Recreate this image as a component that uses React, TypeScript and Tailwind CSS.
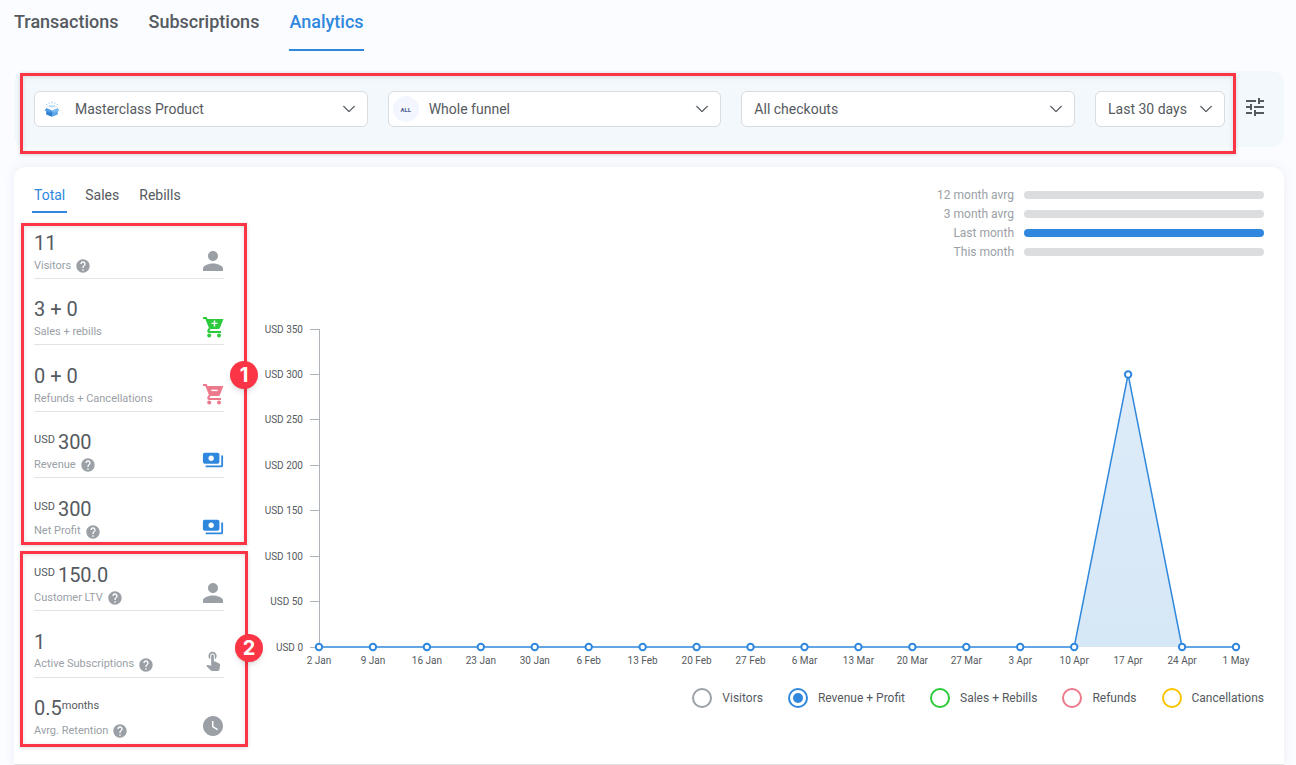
import { useState } from "react";
import clsx from "clsx";
import { BsChevronDown } from "react-icons/bs";
import { MdHelp, MdPayments, MdPerson, MdTouchApp, MdTune, MdWatchLater } from "react-icons/md";

const NAV = ["Transactions", "Subscriptions", "Analytics"];
const TABS = ["Total", "Sales", "Rebills"];

const AVERAGES = [
  { label: "12 month avrg", active: false },
  { label: "3 month avrg", active: false },
  { label: "Last month", active: true },
  { label: "This month", active: false },
];

const SERIES = [
  { label: "Visitors", ring: "border-[#9aa0a6]" },
  { label: "Revenue + Profit", ring: "border-[#2f88dd]" },
  { label: "Sales + Rebills", ring: "border-[#2bcb3c]" },
  { label: "Refunds", ring: "border-[#ec7a8c]" },
  { label: "Cancellations", ring: "border-[#f9c400]" },
];

const POINTS = [
  { date: "2 Jan", value: 0 },
  { date: "9 Jan", value: 0 },
  { date: "16 Jan", value: 0 },
  { date: "23 Jan", value: 0 },
  { date: "30 Jan", value: 0 },
  { date: "6 Feb", value: 0 },
  { date: "13 Feb", value: 0 },
  { date: "20 Feb", value: 0 },
  { date: "27 Feb", value: 0 },
  { date: "6 Mar", value: 0 },
  { date: "13 Mar", value: 0 },
  { date: "20 Mar", value: 0 },
  { date: "27 Mar", value: 0 },
  { date: "3 Apr", value: 0 },
  { date: "10 Apr", value: 0 },
  { date: "17 Apr", value: 300 },
  { date: "24 Apr", value: 0 },
  { date: "1 May", value: 0 },
];

function CartIcon({ sign, className }: { sign: "plus" | "minus"; className: string }) {
  return (
    <svg viewBox="0 0 22 22" className={clsx("size-[22px]", className)} fill="currentColor" aria-hidden="true">
      <path d="M1 1h3.6l1 2H21.4l-3.4 8.8c-.3.8-.9 1.2-1.7 1.2H8.6l-1 1.6c-.1.3 0 .5.3.5H19v2H7.2c-1.6 0-2.5-1.6-1.7-3l1.4-2.4L3.3 3H1z" />
      <circle cx="7.2" cy="19.4" r="2" />
      <circle cx="17" cy="19.4" r="2" />
      <path
        d={sign === "plus" ? "M9.5 7.4h6M12.5 4.4v6" : "M9.3 7.4h6.4"}
        stroke="#fff"
        strokeWidth="1.4"
        fill="none"
      />
    </svg>
  );
}

function ProductIcon() {
  return (
    <svg viewBox="0 0 16 16" className="size-4" aria-hidden="true">
      <path d="M2.2 8.2 8 10.2v5.6l-5.8-2.2z" fill="#2f7fd0" />
      <path d="M13.8 8.2 8 10.2v5.6l5.8-2.2z" fill="#5aa5e6" />
      <path d="M2.4 7 8 9.6 6.2 12 .6 9.6z" fill="#4c9be2" />
      <path d="M13.6 7 8 9.6l1.8 2.4 5.6-2.4z" fill="#7ab9ee" />
      <path
        d="M8 .8v1.6M8 4v2.6M4.8 1.6l.5 1M11.2 1.6l-.5 1M5.6 4l.8 2M10.4 4l-.8 2M2.2 3l1 1M13.8 3l-1 1M3.6 5.2l1 1M12.4 5.2l-1 1"
        stroke="#7fb9ea"
        strokeWidth=".9"
      />
    </svg>
  );
}

interface Stat {
  value: string;
  label: string;
  prefix?: string;
  suffix?: string;
  help?: boolean;
  icon: React.ReactNode;
}

const STATS: Stat[] = [
  { value: "11", label: "Visitors", help: true, icon: <MdPerson className="size-[30px] shrink-0 text-[#9aa0a6]" /> },
  { value: "3 + 0", label: "Sales + rebills", icon: <CartIcon sign="plus" className="text-[#2bcb3c]" /> },
  { value: "0 + 0", label: "Refunds + Cancellations", icon: <CartIcon sign="minus" className="text-[#ec7a8c]" /> },
  { value: "300", prefix: "USD", label: "Revenue", help: true, icon: <MdPayments className="size-[22px] text-[#2f88dd]" /> },
  { value: "300", prefix: "USD", label: "Net Profit", help: true, icon: <MdPayments className="size-[22px] text-[#2f88dd]" /> },
  { value: "150.0", prefix: "USD", label: "Customer LTV", help: true, icon: <MdPerson className="size-[30px] shrink-0 text-[#9aa0a6]" /> },
  { value: "1", label: "Active Subscriptions", help: true, icon: <MdTouchApp className="size-[22px] text-[#9aa0a6]" /> },
  { value: "0.5", suffix: "months", label: "Avrg. Retention", help: true, icon: <MdWatchLater className="size-6 shrink-0 text-[#9aa0a6]" /> },
];

function StatRow({ stat, last }: { stat: Stat; last: boolean }) {
  return (
    <li className={clsx("flex h-12 items-end justify-between border-b", last ? "border-transparent" : "border-[#e2e3e5]")}>
      <div className="pb-px">
        <p className="flex items-start text-xl leading-6 text-[#555a60]">
          {stat.prefix && <span className="mr-[3px] text-[11px] leading-5">{stat.prefix}</span>}
          {stat.value}
          {stat.suffix && <span className="text-[11px] leading-5">{stat.suffix}</span>}
        </p>
        <p className="flex h-[22px] items-center gap-1 text-[11px] text-[#9aa0a6]">
          {stat.label}
          {stat.help && <MdHelp className="size-4" />}
        </p>
      </div>
      <span className="mb-[6px] flex size-[22px] items-center justify-center">{stat.icon}</span>
    </li>
  );
}

interface FilterProps {
  label: string;
  value: string;
  className: string;
  padding: string;
  icon?: React.ReactNode;
}

function Filter({ label, value, className, padding, icon }: FilterProps) {
  return (
    <div className={clsx("relative", className)}>
      <select
        aria-label={label}
        className={clsx(
          "block h-9 w-full appearance-none rounded-md border border-[#d9dcdf] bg-white pr-9 text-sm text-[#555a60] outline-none",
          padding
        )}
        defaultValue={value}
      >
        <option>{value}</option>
      </select>
      {icon && (
        <span className="pointer-events-none absolute inset-y-0 left-[5px] flex w-[26px] items-center justify-center">
          {icon}
        </span>
      )}
      <BsChevronDown
        className="pointer-events-none absolute top-[11px] right-3 size-[14px] text-[#555a60]"
        strokeWidth={0.5}
      />
    </div>
  );
}

const TOP = 9;
const STEP = 318 / 7;
const BASE = TOP + 318;
const FIRST_X = 55;
const GAP_X = 917 / (POINTS.length - 1);

function RevenueChart() {
  const x = (i: number) => FIRST_X + i * GAP_X;
  const y = (value: number) => BASE - (value / 50) * STEP;
  const line = POINTS.map((p, i) => `${x(i)},${y(p.value)}`).join(" ");

  return (
    <svg viewBox="0 0 1000 350" className="block w-full" role="img" aria-label="Revenue and profit by week">
      <defs>
        <linearGradient id="area" x1="0" y1="0" x2="0" y2="1">
          <stop offset="0" stopColor="#deecf9" />
          <stop offset="1" stopColor="#d6e7f6" />
        </linearGradient>
      </defs>
      <path d={`M${FIRST_X + 0.5} ${TOP}V${BASE}`} stroke="#adb3b9" />
      {[350, 300, 250, 200, 150, 100, 50, 0].map((tick) => {
        const ty = Math.floor(y(tick));
        return (
          <g key={tick}>
            <path d={`M46 ${ty + 0.5}h10`} stroke="#adb3b9" />
            <text x="39" y={ty + 4} textAnchor="end" className="fill-[#555a60] text-[10px]">
              USD {tick}
            </text>
          </g>
        );
      })}
      <polygon points={`${FIRST_X},${BASE} ${line} ${x(17)},${BASE}`} fill="url(#area)" />
      <polyline points={line} fill="none" stroke="#2f88dd" strokeWidth="1.5" />
      {POINTS.map((p, i) => (
        <g key={p.date}>
          <circle cx={x(i)} cy={y(p.value)} r="3.2" fill="#fff" stroke="#2f88dd" strokeWidth="2" />
          <text x={x(i)} y={BASE + 17} textAnchor="middle" className="fill-[#555a60] text-[10px]">
            {p.date}
          </text>
        </g>
      ))}
    </svg>
  );
}

const calloutClass =
  "pointer-events-none absolute border-3 border-[#fb3545] shadow-[0_1px_4px_rgba(0,0,0,0.15),inset_0_1px_5px_rgba(0,0,0,0.12)]";
const badgeClass =
  "absolute flex size-7 items-center justify-center rounded-full bg-[#fb3545] font-['Inter',sans-serif] text-xl font-bold text-white shadow-md";

export default function App() {
  const [series, setSeries] = useState("Revenue + Profit");

  return (
    <div className="min-h-screen overflow-hidden bg-[#fbfcff] font-['Roboto',sans-serif] text-[#555a60]">
      <nav className="flex h-[51px] gap-[30px] pl-[14px] text-lg font-medium">
        {NAV.map((item) => (
          <a
            key={item}
            href="#"
            className={clsx("border-b-2 pt-2", item === "Analytics" ? "border-[#2f88dd] text-[#2f88dd]" : "border-transparent")}
          >
            {item}
          </a>
        ))}
      </nav>

      <main className="pr-3 pl-[14px]">
        <section className="relative mt-5 flex h-[76px] items-start gap-5 rounded-xl bg-[#f2f8fc] pt-5 pl-5">
          <Filter label="Product" value="Masterclass Product" className="flex-1" padding="pl-10" icon={<ProductIcon />} />
          <Filter
            label="Funnel"
            value="Whole funnel"
            className="flex-1"
            padding="pl-10"
            icon={
              <span className="flex size-[26px] items-center justify-center rounded-full bg-[#f3f5ff] text-[6px] font-bold text-[#4a5a8a]">
                ALL
              </span>
            }
          />
          <Filter label="Checkout" value="All checkouts" className="flex-1" padding="pl-3" />
          <div className="flex items-center gap-[18px] pr-[17px]">
            <Filter label="Period" value="Last 30 days" className="w-[130px]" padding="pl-3" />
            <button type="button" aria-label="More filters" className="-mt-1">
              <MdTune className="size-6" />
            </button>
          </div>
          <div className={clsx(calloutClass, "top-[2px] right-12 -bottom-[7px] left-[6px]")} />
        </section>

        <section className="mt-5 flex h-[598px] rounded-t-xl border-b border-[#e2e3e5] bg-white px-5 shadow-[0_0_12px_rgba(60,80,160,0.08)]">
          <div className="relative w-[190px] shrink-0">
            <div className="-ml-[2px] flex gap-4 pt-[15px] text-sm">
              {TABS.map((tab) => (
                <button
                  key={tab}
                  type="button"
                  className={clsx("h-[31px] border-b-2 px-[2px] pb-1", tab === "Total" ? "border-[#2f88dd] text-[#2f88dd]" : "border-transparent")}
                >
                  {tab}
                </button>
              ))}
            </div>
            <ul className="mt-[18px] flex h-[513px] flex-col justify-between">
              {STATS.map((stat, i) => (
                <StatRow key={stat.label} stat={stat} last={i === STATS.length - 1} />
              ))}
            </ul>
            <div className={clsx(calloutClass, "top-14 -right-[23px] -left-[13px] h-[322px]")}>
              <span className={clsx(badgeClass, "top-[135px] -right-[14px]")}>1</span>
            </div>
            <div className={clsx(calloutClass, "top-[384px] -right-6 -left-[14px] h-[196px]")}>
              <span className={clsx(badgeClass, "top-[80px] -right-[18px]")}>2</span>
            </div>
          </div>

          <div className="ml-10 flex min-w-0 flex-1 flex-col">
            <dl className="flex flex-col items-end pt-[18px] text-xs text-[#9aa0a6]">
              {AVERAGES.map(({ label, active }) => (
                <div key={label} className="flex h-[19px] items-center gap-[10px]">
                  <dt>{label}</dt>
                  <dd className={clsx("h-2 w-60 rounded-full", active ? "bg-[#2f88dd]" : "bg-[#dcdddf]")} />
                </div>
              ))}
            </dl>

            <div className="mt-[59px]">
              <RevenueChart />
            </div>

            <fieldset className="mt-[18px] flex justify-end gap-[25px] text-xs">
              <legend className="sr-only">Series</legend>
              {SERIES.map(({ label, ring }) => (
                <label key={label} className="flex h-5 items-center gap-[10px]">
                  <span className="relative flex size-5 items-center justify-center">
                    <input
                      type="radio"
                      name="series"
                      checked={series === label}
                      onChange={() => setSeries(label)}
                      className={clsx("size-5 appearance-none rounded-full border-2", ring)}
                    />
                    {series === label && <span className="pointer-events-none absolute size-[10px] rounded-full bg-[#2f88dd]" />}
                  </span>
                  {label}
                </label>
              ))}
            </fieldset>
          </div>
        </section>
      </main>
    </div>
  );
}
